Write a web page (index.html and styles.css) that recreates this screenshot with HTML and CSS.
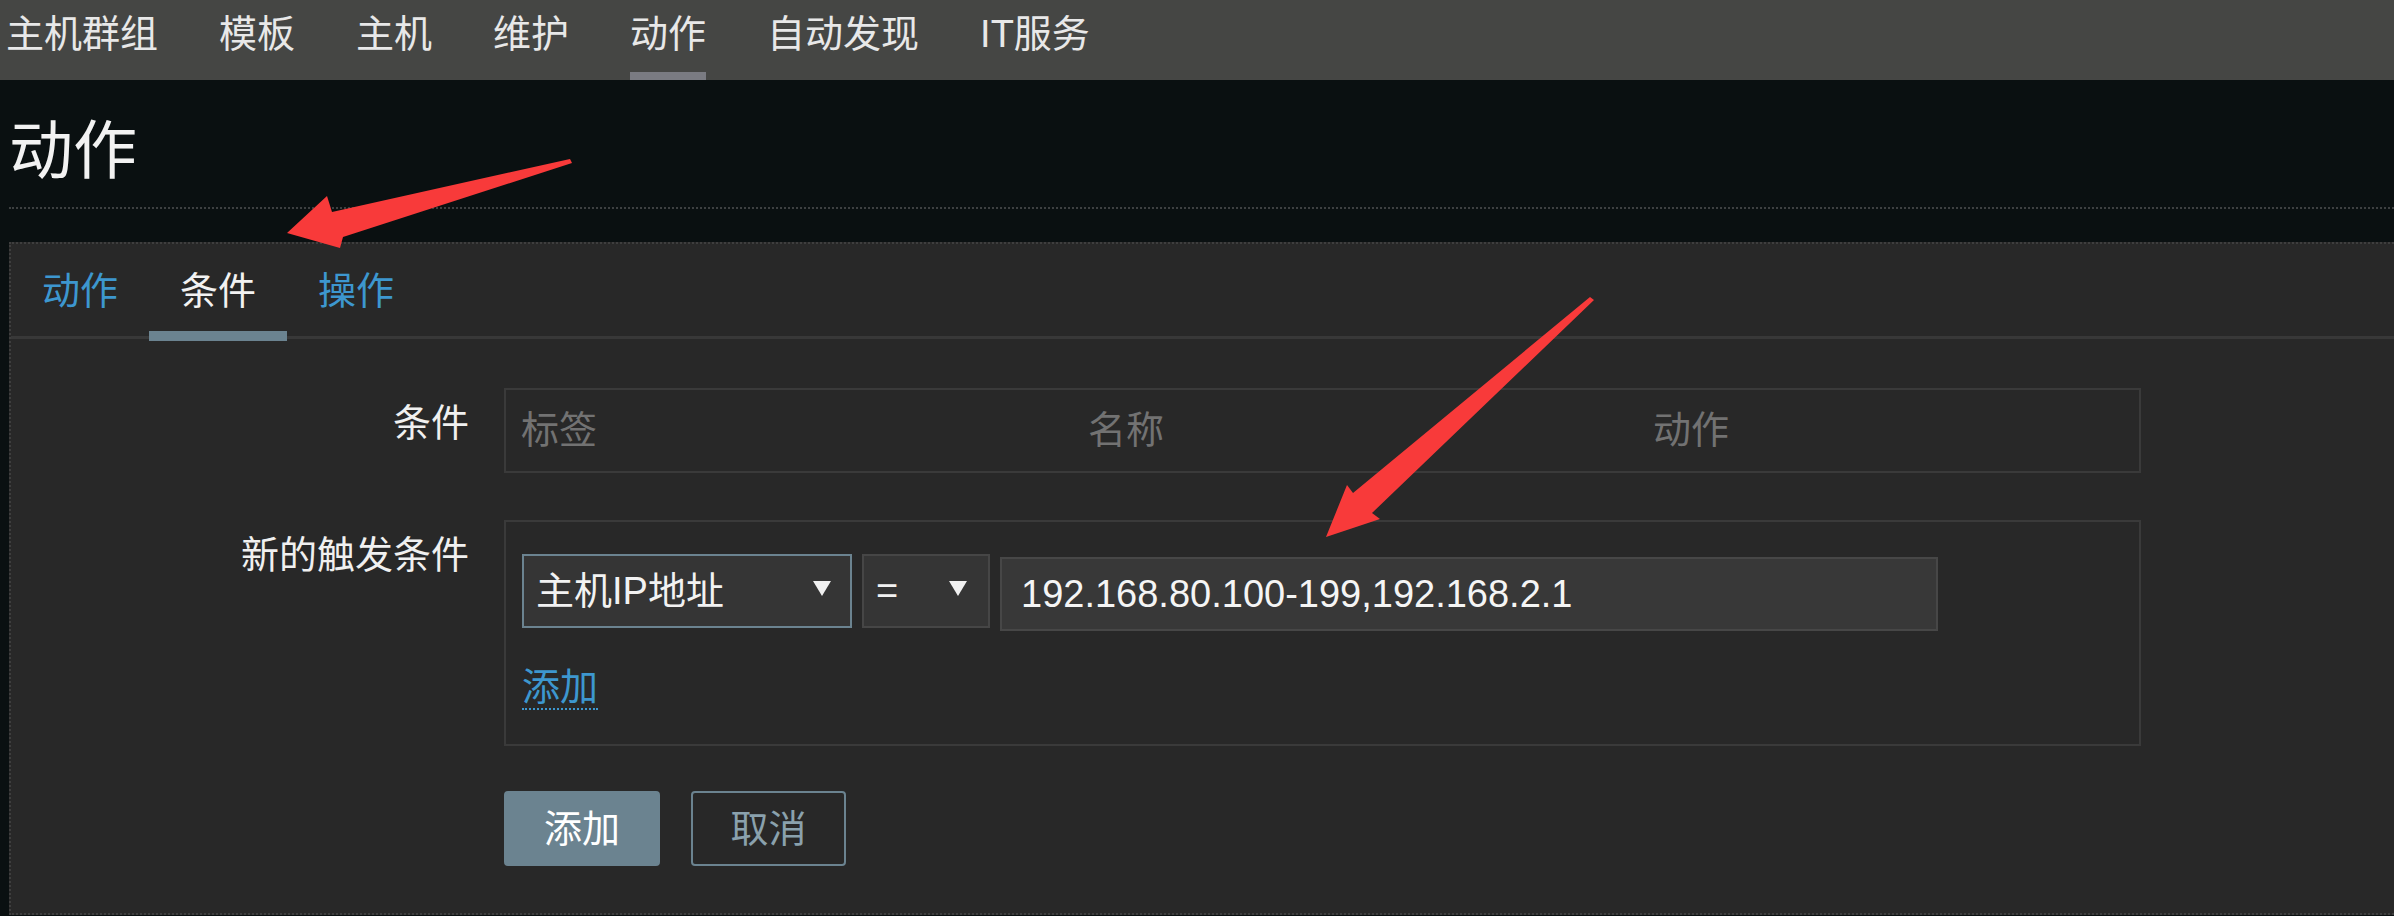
FILE: index.html
```html
<!DOCTYPE html>
<html lang="zh-CN">
<head>
<meta charset="utf-8">
<title>动作</title>
<link rel="stylesheet" href="styles.css">
</head>
<body>
<nav class="topnav">
  <a class="nav-item">主机群组</a>
  <a class="nav-item">模板</a>
  <a class="nav-item">主机</a>
  <a class="nav-item">维护</a>
  <a class="nav-item active">动作</a>
  <a class="nav-item">自动发现</a>
  <a class="nav-item">IT服务</a>
</nav>
<header class="page-header">
  <h1 class="page-title">动作</h1>
</header>
<section class="panel">
  <div class="tabs">
    <span class="tab">动作</span>
    <span class="tab active">条件</span>
    <span class="tab">操作</span>
  </div>
  <div class="form">
    <div class="form-row">
      <label class="form-label">条件</label>
      <div class="cond-table">
        <span class="th">标签</span>
        <span class="th">名称</span>
        <span class="th">动作</span>
      </div>
    </div>
    <div class="form-row form-row-last">
      <label class="form-label">新的触发条件</label>
      <div class="new-cond">
        <div class="cond-inputs">
          <div class="select select-wide focused"><span>主机IP地址</span><i class="caret"></i></div>
          <div class="select select-op"><span>=</span><i class="caret"></i></div>
          <div class="text-input">192.168.80.100-199,192.168.2.1</div>
        </div>
        <a class="link-add">添加</a>
      </div>
    </div>
    <div class="form-actions">
      <button class="btn">添加</button>
      <button class="btn btn-alt">取消</button>
    </div>
  </div>
</section>
<svg class="annotations" width="2394" height="916" viewBox="0 0 2394 916">
  <polygon class="arrow" points="570,159 332,212 327,196 287,233 340,248 343,237 572,163"/>
  <polygon class="arrow" points="1590,297 1353,493 1347,485 1326,537 1380,519 1372,513 1594,300"/>
</svg>
</body>
</html>
```

FILE: styles.css
```css
* {
  box-sizing: border-box;
}

body {
  margin: 0;
  width: 2394px;
  height: 916px;
  overflow: hidden;
  position: relative;
  background: #0a1011;
  color: #f0f0f0;
  font-family: "Liberation Sans", "Noto Sans CJK SC", sans-serif;
  font-size: 38px;
}

/* top navigation */
.topnav {
  display: flex;
  gap: 61px;
  height: 80px;
  padding-left: 6px;
  background: #454644;
}

.nav-item {
  display: flex;
  align-items: center;
  padding-bottom: 4px;
  border-bottom: 8px solid transparent;
  line-height: 44px;
  color: #e8e8e8;
}

.nav-item.active {
  border-bottom-color: #7a7b82;
}

/* page header */
.page-header {
  margin-left: 9px;
  padding-top: 31px;
  padding-bottom: 16px;
  margin-bottom: 33px;
  border-bottom: 2px dotted #3d4041;
}

.page-title {
  margin: 0;
  font-size: 64px;
  font-weight: normal;
  line-height: 80px;
  color: #f2f2f2;
}

/* panel */
.panel {
  margin-left: 9px;
  background: #282828;
  border-top: 2px dotted #3e3e3e;
  border-left: 2px dotted #3e3e3e;
  border-bottom: 2px dotted #3e3e3e;
}

.tabs {
  display: flex;
  align-items: flex-start;
  border-bottom: 3px solid #383838;
}

.tab {
  padding: 25px 31px 18px;
  line-height: 44px;
  border-bottom: 10px solid transparent;
  margin-bottom: -5px;
  color: #3d97cf;
}

.tab.active {
  color: #f2f2f2;
  border-bottom-color: #6b8390;
}

/* form */
.form {
  padding-top: 49px;
}

.form-row {
  display: grid;
  grid-template-columns: 458px 1637px;
  column-gap: 35px;
  margin-bottom: 47px;
}

.form-row-last {
  margin-bottom: 45px;
}

.form-label {
  text-align: right;
  line-height: 44px;
  padding-top: 13px;
  color: #f0f0f0;
}

.cond-table {
  display: grid;
  grid-template-columns: 567px 565px 1fr;
  height: 85px;
  padding: 18px 0 19px 15px;
  border: 2px solid #3a3a3a;
  line-height: 44px;
  color: #727272;
}

.new-cond {
  border: 2px solid #3a3a3a;
  padding: 32px 16px 34px;
}

.cond-inputs {
  display: flex;
  align-items: flex-start;
  gap: 10px;
}

.select {
  display: flex;
  align-items: center;
  justify-content: space-between;
  height: 74px;
  background: #353535;
  border: 2px solid #464646;
  padding: 0 19px 0 12px;
  line-height: 44px;
  color: #f2f2f2;
}

.select-wide {
  width: 330px;
}

.select-op {
  width: 128px;
  padding-right: 21px;
}

.select.focused {
  border-color: #6b8390;
}

.caret {
  width: 0;
  height: 0;
  border-left: 9px solid transparent;
  border-right: 9px solid transparent;
  border-top: 15px solid #f0f0f0;
  margin-top: -6px;
}

.text-input {
  display: flex;
  align-items: center;
  width: 938px;
  height: 74px;
  margin-top: 3px;
  padding-left: 19px;
  background: #383838;
  border: 2px solid #474747;
  color: #f5f5f5;
}

.link-add {
  display: block;
  width: fit-content;
  margin-top: 35px;
  line-height: 42px;
  color: #3d97cf;
  border-bottom: 2px dotted #3d97cf;
}

.form-actions {
  display: flex;
  gap: 31px;
  padding-left: 493px;
  padding-bottom: 47px;
}

.btn {
  width: 156px;
  height: 75px;
  padding: 0;
  border-radius: 4px;
  border: 2px solid #6b8390;
  background: #6b8390;
  color: #ffffff;
  font: inherit;
  line-height: 44px;
}

.btn-alt {
  width: 155px;
  background: transparent;
  color: #8aa1ad;
}

/* screenshot annotations */
.annotations {
  position: absolute;
  top: 0;
  left: 0;
  pointer-events: none;
}

.arrow {
  fill: #f83a3a;
}
```
